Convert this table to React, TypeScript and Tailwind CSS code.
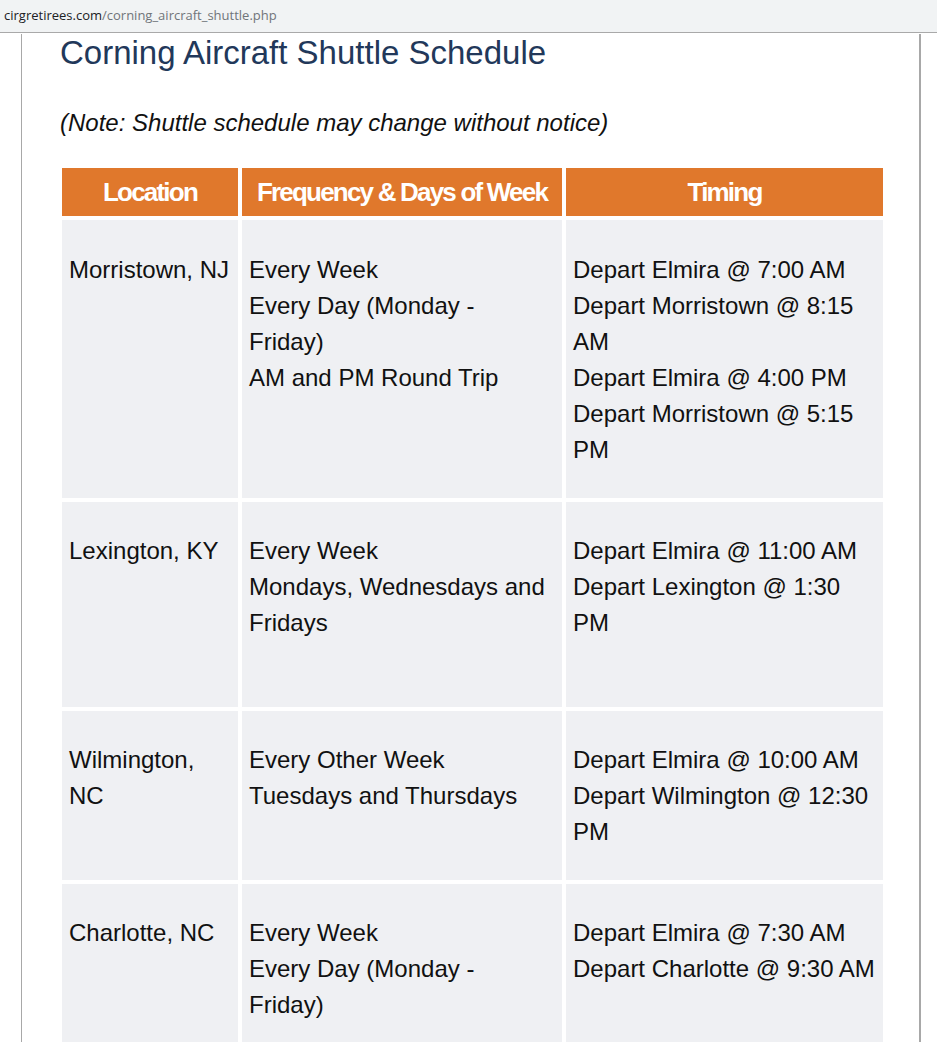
import React from "react";

type Row = {
  location: string[];
  frequency: string[];
  timing: string[];
  height: string;
  pad: string;
};

const rows: Row[] = [
  {
    location: ["Morristown, NJ"],
    frequency: ["Every Week", "Every Day (Monday -", "Friday)", "AM and PM Round Trip"],
    timing: [
      "Depart Elmira @ 7:00 AM",
      "Depart Morristown @ 8:15",
      "AM",
      "Depart Elmira @ 4:00 PM",
      "Depart Morristown @ 5:15",
      "PM",
    ],
    height: "h-[278px]",
    pad: "pt-[32px]",
  },
  {
    location: ["Lexington, KY"],
    frequency: ["Every Week", "Mondays, Wednesdays and", "Fridays"],
    timing: ["Depart Elmira @ 11:00 AM", "Depart Lexington @ 1:30", "PM"],
    height: "h-[205px]",
    pad: "pt-[31px]",
  },
  {
    location: ["Wilmington,", "NC"],
    frequency: ["Every Other Week", "Tuesdays and Thursdays"],
    timing: ["Depart Elmira @ 10:00 AM", "Depart Wilmington @ 12:30", "PM"],
    height: "h-[169px]",
    pad: "pt-[31px]",
  },
  {
    location: ["Charlotte, NC"],
    frequency: ["Every Week", "Every Day (Monday -", "Friday)"],
    timing: ["Depart Elmira @ 7:30 AM", "Depart Charlotte @ 9:30 AM"],
    height: "h-[170px]",
    pad: "pt-[31px]",
  },
];

const Cell = ({ lines, height, pad }: { lines: string[]; height: string; pad: string }) => (
  <div className={`bg-[#eff0f3] pl-[7px] pr-2 text-[24px] leading-[36px] text-[#111] whitespace-nowrap ${pad} ${height}`}>
    {lines.map((l, i) => (
      <div key={i}>{l}</div>
    ))}
  </div>
);

export default function App() {
  return (
    <div className="w-[937px] h-[1042px] overflow-hidden bg-white font-['Liberation_Sans',Arial,sans-serif]">
      <div className="h-[33px] bg-[#f1f3f4] border-b border-[#a9a9a9] px-1 pt-[6px] text-[13px] font-['Open_Sans',Arial,sans-serif]">
        <span className="text-[#202124]">cirgretirees.com</span>
        <span className="text-[#70757a]">/corning_aircraft_shuttle.php</span>
      </div>
      <div className="ml-[21px] w-[900px] h-full border-l border-r-2 border-[#a8a8a8] pl-[38px]">
        <h1 className="mt-[1px] text-[33px] leading-[38px] text-[#22385a]">
          Corning Aircraft Shuttle Schedule
        </h1>
        <p className="mt-[33px] text-[24px] leading-[36px] italic text-[#111]">
          (Note: Shuttle schedule may change without notice)
        </p>
        <div className="mt-[27px] ml-[2px] grid grid-cols-[176px_320px_317px] gap-[4px]">
          {["Location", "Frequency & Days of Week", "Timing"].map((h) => (
            <div
              key={h}
              className="h-[48px] flex items-center justify-center bg-[#e0782c] text-white font-bold text-[26px] tracking-[-1.8px]"
            >
              {h}
            </div>
          ))}
          {rows.map((r, i) => (
            <React.Fragment key={i}>
              <Cell lines={r.location} height={r.height} pad={r.pad} />
              <Cell lines={r.frequency} height={r.height} pad={r.pad} />
              <Cell lines={r.timing} height={r.height} pad={r.pad} />
            </React.Fragment>
          ))}
        </div>
      </div>
    </div>
  );
}
